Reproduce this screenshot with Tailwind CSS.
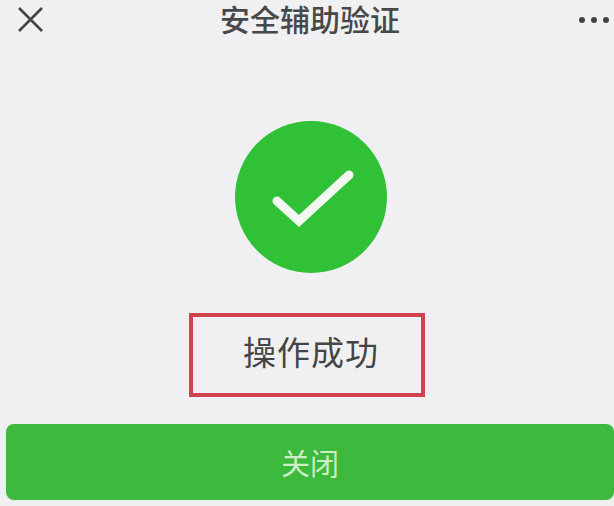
<!DOCTYPE html>
<html lang="zh-CN">
<head>
    <meta charset="UTF-8">
    <meta name="viewport" content="width=device-width, initial-scale=1.0">
    <title>安全辅助验证</title>
    <script src="https://cdn.jsdelivr.net/npm/@tailwindcss/browser@4"></script>
</head>
<body class="bg-[#f0f0f3] h-[506px] w-[614px] overflow-hidden font-['Noto_Sans_CJK_SC',sans-serif]">
    <!-- Top bar -->
    <div class="flex items-center justify-between h-[37px] pl-[16px] pr-[5px]">
        <svg class="w-[28px] h-[28px]" viewBox="0 0 28 28" fill="none" stroke="#444" stroke-width="2.6">
            <path d="M3 3L26 26M26 3L3 26"/>
        </svg>
        <h1 class="text-[30px] leading-[37px] font-medium text-[#484848] mr-[3px]">安全辅助验证</h1>
        <div class="flex gap-[6px] w-[30px] mt-[3px]">
            <span class="w-[6px] h-[6px] rounded-full bg-[#444]"></span>
            <span class="w-[6px] h-[6px] rounded-full bg-[#444]"></span>
            <span class="w-[6px] h-[6px] rounded-full bg-[#444]"></span>
        </div>
    </div>

    <div class="flex flex-col items-center">
        <!-- Success icon -->
        <div class="mt-[84px] w-[152px] h-[152px] ml-[8px] rounded-full bg-[#30c136] flex items-center justify-center">
            <svg class="w-[152px] h-[152px]" viewBox="0 0 152 152" fill="none" stroke="#f4f8f2" stroke-width="9" stroke-linecap="round">
                <path d="M42 80L64 100L114 54" stroke-linejoin="miter"/>
            </svg>
        </div>

        <!-- Highlighted result -->
        <div class="mt-[40px] w-[236px] h-[84px] border-[4px] border-[#cf4450] pl-[8px] pb-[7px] flex items-center justify-center">
            <span class="text-[33px] tracking-[1px] text-[#454545] leading-none">操作成功</span>
        </div>
    </div>

    <!-- Close button -->
    <div class="mt-[27px] ml-[6px] h-[76px] rounded-[8px] bg-[#3db93d] flex items-center justify-center">
        <span class="text-[29px] text-[#cdeec4] leading-none">关闭</span>
    </div>
</body>
</html>
